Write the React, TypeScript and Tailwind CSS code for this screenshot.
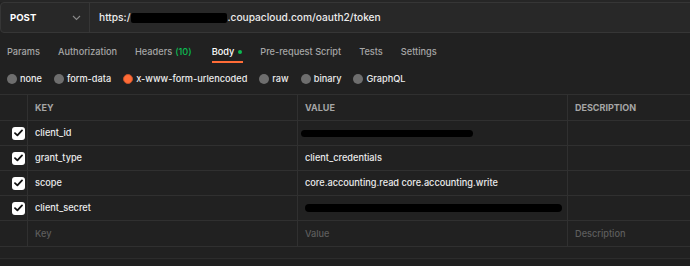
import React from "react";

const Check = () => (
  <div className="w-[13px] h-[13px] rounded-[3px] bg-white flex items-center justify-center">
    <svg width="9" height="8" viewBox="0 0 9 8" fill="none">
      <path d="M1 4.2 L3.4 6.4 L8 1.4" stroke="#111" strokeWidth="1.8" strokeLinecap="round" strokeLinejoin="round" />
    </svg>
  </div>
);

const Radio = ({ on, label }: { on?: boolean; label: string }) => (
  <div className="flex items-center gap-[3px]">
    {on ? (
      <div className="w-[10px] h-[10px] rounded-full bg-[#ff6c37] border-[1px] border-[#c4512a]" />
    ) : (
      <div className="w-[10px] h-[10px] rounded-full bg-[#6e6e6e]" />
    )}
    <span className="text-[9.2px] text-[#ececec] font-medium">{label}</span>
  </div>
);

type Row = { key: string; value: React.ReactNode };

const rows: Row[] = [
  {
    key: "client_id",
    value: <div className="w-[172px] h-[7px] rounded-full bg-black ml-[-4px]" />,
  },
  { key: "grant_type", value: "client_credentials" },
  { key: "scope", value: "core.accounting.read core.accounting.write" },
  {
    key: "client_secret",
    value: <div className="w-[257px] h-[8px] rounded-full bg-black ml-[0px]" />,
  },
];

export default function App() {
  return (
    <div
      className="w-[690px] h-[266px] bg-[#212121] overflow-hidden relative"
      style={{ fontFamily: "Inter, 'Noto Sans', sans-serif" }}
    >
      <div className="h-[2px] bg-[#262626]" />
      {/* URL bar */}
      <div className="h-[31px] w-[720px] flex border border-[#363636] rounded-[4px] bg-[#282828]">
        <div className="w-[89px] shrink-0 flex items-center justify-between pl-[9px] pr-[8px] pt-[1px] border-r border-[#363636]">
          <span className="text-[9.6px] font-bold text-white">POST</span>
          <svg width="9" height="6" viewBox="0 0 9 6" fill="none">
            <path d="M1 1 L4.5 4.5 L8 1" stroke="#8a8a8a" strokeWidth="1.1" />
          </svg>
        </div>
        <div className="flex items-center pl-[9px] pt-[1px] text-[10.2px] text-[#ececec] font-medium">
          <span>https:/</span>
          <span className="inline-block w-[96px] h-[10px] bg-black rounded-[2px] ml-[1px]" />
          <span>.coupacloud.com/oauth2/token</span>
        </div>
      </div>
      {/* Tabs */}
      <div className="h-[31px] flex items-stretch pl-[7px] gap-[18px] text-[9.2px] font-medium text-[#a6a6a6]">
        <div className="flex items-center pt-[6px]">Params</div>
        <div className="flex items-center pt-[6px]">Authorization</div>
        <div className="flex items-center pt-[6px] mr-[2px]">
          Headers <span className="text-[#0cbb52] ml-[3px]">(10)</span>
        </div>
        <div className="flex items-center pt-[6px] relative text-white">
          Body
          <span className="inline-block w-[4px] h-[4px] rounded-full bg-[#0cbb52] ml-[4px]" />
          <div className="absolute left-0 right-[-1px] bottom-[1px] h-[2px] bg-[#ff6c37]" />
        </div>
        <div className="flex items-center pt-[6px]">Pre-request Script</div>
        <div className="flex items-center pt-[6px]">Tests</div>
        <div className="flex items-center pt-[6px]">Settings</div>
      </div>
      {/* Radios */}
      <div className="h-[30px] flex items-center pl-[7px] gap-[12px]">
        <Radio label="none" />
        <Radio label="form-data" />
        <Radio on label="x-www-form-urlencoded" />
        <Radio label="raw" />
        <Radio label="binary" />
        <Radio label="GraphQL" />
      </div>
      {/* Table */}
      <div className="border-t border-[#303030] text-[9.2px] font-medium">
        <div className="flex h-[26px] border-b border-[#303030]">
          <div className="w-[28px] shrink-0 border-r border-[#303030]" />
          <div className="w-[270px] shrink-0 border-r border-[#303030] flex items-center pl-[7px] text-[9px] font-bold text-[#a6a6a6]">KEY</div>
          <div className="w-[270px] shrink-0 border-r border-[#303030] flex items-center pl-[7px] text-[9px] font-bold text-[#a6a6a6]">VALUE</div>
          <div className="flex-1 flex items-center pl-[7px] text-[9px] font-bold text-[#a6a6a6]">DESCRIPTION</div>
        </div>
        {rows.map((r) => (
          <div key={r.key} className="flex h-[25px] border-b border-[#303030]">
            <div className="w-[28px] shrink-0 border-r border-[#303030] flex items-center pl-[12px]">
              <Check />
            </div>
            <div className="w-[270px] shrink-0 border-r border-[#303030] flex items-center pl-[7px] text-[#ececec]">{r.key}</div>
            <div className="w-[270px] shrink-0 border-r border-[#303030] flex items-center pl-[7px] text-[#ececec]">{r.value}</div>
            <div className="flex-1" />
          </div>
        ))}
        <div className="flex h-[26px] border-b border-[#303030]">
          <div className="w-[28px] shrink-0 border-r border-[#303030]" />
          <div className="w-[270px] shrink-0 border-r border-[#303030] flex items-center pl-[7px] text-[#5e5e5e]">Key</div>
          <div className="w-[270px] shrink-0 border-r border-[#303030] flex items-center pl-[7px] text-[#5e5e5e]">Value</div>
          <div className="flex-1 flex items-center pl-[7px] text-[#5e5e5e]">Description</div>
        </div>
      </div>
      <div className="h-[11px]" />
      <div className="border-t border-[#2c2c2c] h-[10px] bg-[#1f1f1f]" />
    </div>
  );
}
